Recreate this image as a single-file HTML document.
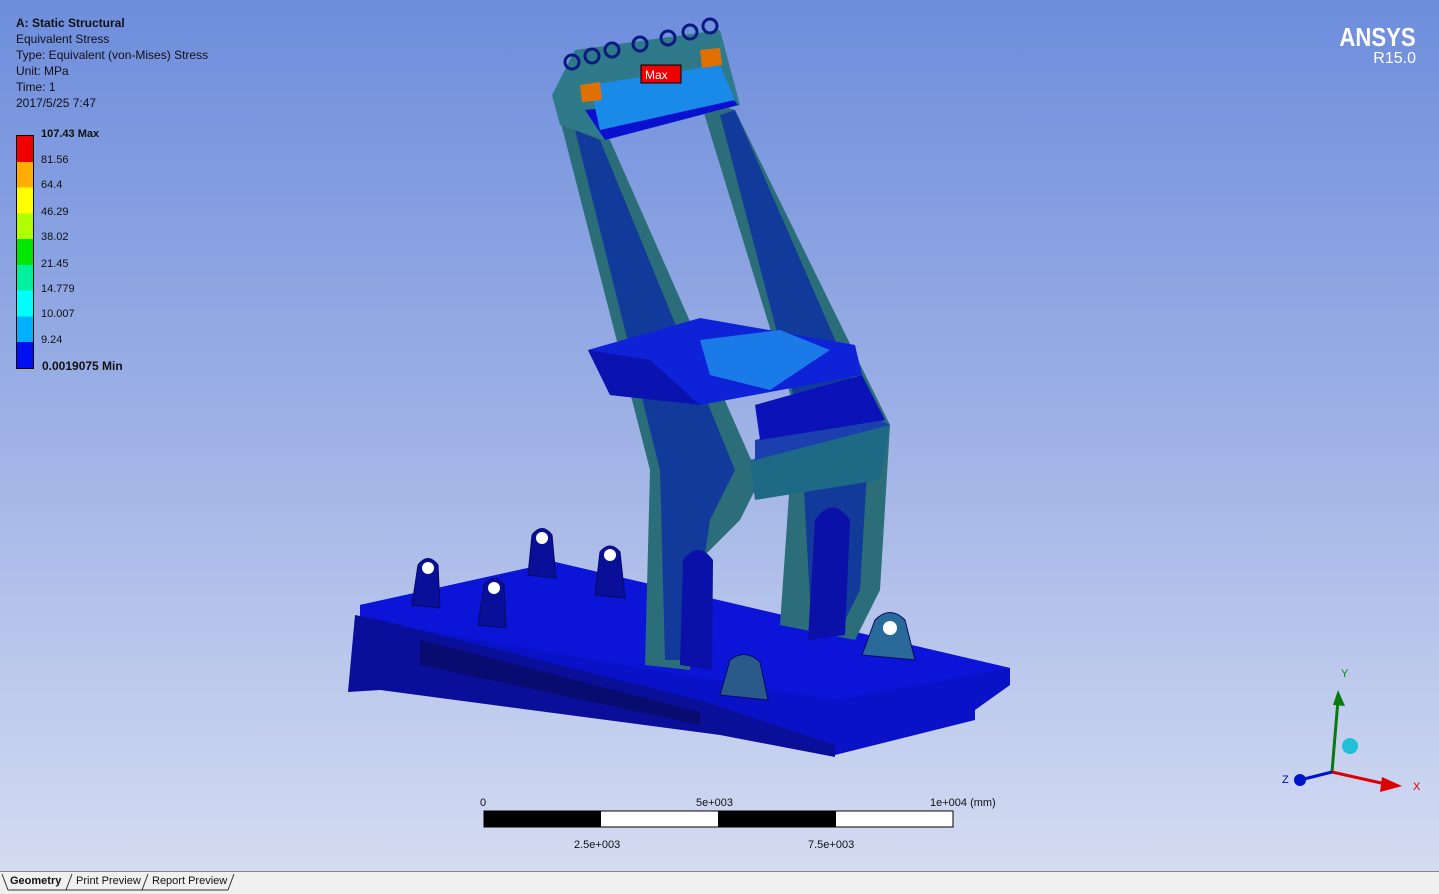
<!DOCTYPE html>
<html><head><meta charset="utf-8"><style>
html,body{margin:0;padding:0;width:1439px;height:893px;overflow:hidden;font-family:"Liberation Sans","Noto Sans CJK SC",sans-serif}
#vp{position:absolute;left:0;top:0;width:1439px;height:871px;background:linear-gradient(#6d8ddc,#9fb2e6 50%,#d4dcf2)}
.t{position:absolute;font-size:12px;color:#111;white-space:nowrap}
.b{font-weight:bold}
#tabs{position:absolute;left:0;top:871px;width:1439px;height:22px;background:#f0f0f0;border-top:1px solid #888}
</style></head><body>
<div id="vp">
<div class="t b" style="left:16px;top:16px">A: Static Structural</div>
<div class="t" style="left:16px;top:32px">Equivalent Stress</div>
<div class="t" style="left:16px;top:48px">Type: Equivalent (von-Mises) Stress</div>
<div class="t" style="left:16px;top:64px">Unit: MPa</div>
<div class="t" style="left:16px;top:80px">Time: 1</div>
<div class="t" style="left:16px;top:96px">2017/5/25 7:47</div>
<div style="position:absolute;left:16px;top:135px;width:16px;height:232px;border:1px solid #000;background:linear-gradient(#e00 0 11.1%,#ffad00 11.1% 22.2%,#ff0 22.2% 33.3%,#b0ff00 33.3% 44.4%,#00e600 44.4% 55.5%,#00f0a0 55.5% 66.6%,#00ffff 66.6% 77.7%,#00b0ff 77.7% 88.8%,#0010f0 88.8%)"></div>
<div class="t b" style="left:41px;top:128px;font-size:11px">107.43 Max</div>
<div class="t" style="left:41px;top:154px;font-size:11px">81.56</div>
<div class="t" style="left:41px;top:179px;font-size:11px">64.4</div>
<div class="t" style="left:41px;top:206px;font-size:11px">46.29</div>
<div class="t" style="left:41px;top:231px;font-size:11px">38.02</div>
<div class="t" style="left:41px;top:258px;font-size:11px">21.45</div>
<div class="t" style="left:41px;top:283px;font-size:11px">14.779</div>
<div class="t" style="left:41px;top:308px;font-size:11px">10.007</div>
<div class="t" style="left:41px;top:334px;font-size:11px">9.24</div>
<div class="t b" style="left:42px;top:359px">0.0019075 Min</div>
<div class="t" style="right:23px;top:22px;font-size:26px;color:#fff;font-weight:bold;transform:scaleX(0.85);transform-origin:right">ANSYS</div>
<div class="t" style="right:23px;top:50px;font-size:16px;color:#fff">R15.0</div>
<svg width="1439" height="871" style="position:absolute;left:0;top:0">
<polygon points="360,605 555,562 1010,668 1010,685 975,710 975,720 835,755 820,752 360,640" fill="#0a12c8"/>
<polygon points="360,605 555,562 1010,668 835,700 360,620" fill="#0c14d8"/>
<polygon points="355,615 380,620 700,700 835,745 835,757 720,735 380,690 348,692" fill="#0a0f9a"/>
<polygon points="420,640 700,712 700,725 420,665" fill="#080c70"/>
<g fill="#0a0f9a" stroke="#050a60"><path d="M412,605 L418,565 Q428,552 438,565 L440,608Z"/><path d="M478,625 L484,585 Q494,572 504,585 L506,628Z"/><path d="M528,575 L532,535 Q542,522 552,535 L556,578Z"/><path d="M595,595 L600,552 Q610,540 620,552 L625,598Z"/><path d="M862,655 L875,620 Q890,605 905,620 L915,660Z" fill="#2a6a9a"/><path d="M720,695 L730,660 Q745,648 760,662 L768,700Z" fill="#2a5a8a"/></g>
<g fill="#fff"><circle cx="428" cy="568" r="6"/><circle cx="494" cy="588" r="6"/><circle cx="542" cy="538" r="6"/><circle cx="610" cy="555" r="6"/><circle cx="890" cy="628" r="7"/></g>
<polygon points="555,100 610,140 760,480 740,520 700,560 690,670 645,665 650,470" fill="#2b6e7a"/>
<polygon points="575,130 600,140 735,470 710,520 690,660 665,660 660,470" fill="#123a9a"/>
<polygon points="700,100 735,110 890,425 880,590 855,640 780,625 790,480 795,410" fill="#2b6e7a"/>
<polygon points="720,115 735,110 870,420 860,590 840,630 810,600 800,420" fill="#123a9a"/>
<polygon points="750,460 890,425 880,480 755,500" fill="#1e6a86"/>
<polygon points="755,460 890,425 870,415 755,440" fill="#1c3fb0"/>
<path d="M680,665 L683,560 Q698,540 713,560 L712,670Z" fill="#0a10a8"/>
<path d="M808,640 L815,520 Q832,495 850,520 L845,635Z" fill="#0a10a8"/>
<polygon points="588,350 700,318 855,345 862,375 700,405 610,395" fill="#0e22d8"/>
<polygon points="700,340 780,330 830,350 770,390 710,375" fill="#1a7ae8"/>
<polygon points="588,350 610,395 700,405 650,360" fill="#0a12b0"/>
<polygon points="755,405 862,375 885,420 760,440" fill="#0a12b8"/>
<polygon points="552,95 575,50 720,30 740,105 605,140 560,125" fill="#2e7a8a"/>
<polygon points="585,110 730,95 738,105 605,140" fill="#0a10d0"/>
<polygon points="590,85 720,65 735,100 600,130" fill="#1a8ae8"/>
<polygon points="580,85 600,82 602,100 582,102" fill="#e07000"/>
<polygon points="700,50 720,48 722,65 702,68" fill="#e07000"/>
<g fill="none" stroke="#0a1a80" stroke-width="3"><circle cx="572" cy="62" r="7"/><circle cx="592" cy="56" r="7"/><circle cx="612" cy="50" r="7"/><circle cx="640" cy="44" r="7"/><circle cx="668" cy="38" r="7"/><circle cx="690" cy="32" r="7"/><circle cx="710" cy="26" r="7"/></g>
<rect x="641" y="65" width="40" height="18" fill="#e00" stroke="#000"/>
<text x="645" y="79" font-size="12" fill="#fff" font-family="Liberation Sans">Max</text>
<line x1="1332" y1="772" x2="1338" y2="700" stroke="#0a7a0a" stroke-width="3"/>
<polygon points="1333,705 1338,690 1345,706" fill="#0a7a0a"/>
<line x1="1332" y1="772" x2="1390" y2="785" stroke="#d00" stroke-width="3"/>
<polygon points="1382,777 1402,786 1380,792" fill="#d00"/>
<line x1="1332" y1="772" x2="1300" y2="780" stroke="#0014c8" stroke-width="3"/>
<circle cx="1300" cy="780" r="6" fill="#0014c8"/>
<circle cx="1350" cy="746" r="8" fill="#22c0d8"/>
<text x="1341" y="677" font-size="11" fill="#080">Y</text>
<text x="1413" y="790" font-size="11" fill="#c00">X</text>
<text x="1282" y="783" font-size="11" fill="#00c">Z</text>
<rect x="484" y="811" width="469" height="16" fill="#fff" stroke="#000"/>
<rect x="484" y="811" width="117" height="16" fill="#000"/>
<rect x="718" y="811" width="118" height="16" fill="#000"/>
<g font-size="11" fill="#111" font-family="Liberation Sans"><text x="480" y="806">0</text><text x="696" y="806">5e+003</text><text x="930" y="806">1e+004  (mm)</text><text x="574" y="848">2.5e+003</text><text x="808" y="848">7.5e+003</text></g>
</svg>
</div>
<div id="tabs">
<div class="t b" style="left:10px;top:3px;font-size:11px">Geometry</div>
<div class="t" style="left:76px;top:3px;font-size:11px">Print Preview</div>
<div class="t" style="left:152px;top:3px;font-size:11px">Report Preview</div>
<svg width="300" height="22" style="position:absolute;left:0;top:0"><path d="M2,2 L8,18 M66,18 L72,2 M142,18 L148,2 M234,2 L228,18 M8,18 L228,18" stroke="#333" fill="none"/></svg>
</div>
</body></html>
